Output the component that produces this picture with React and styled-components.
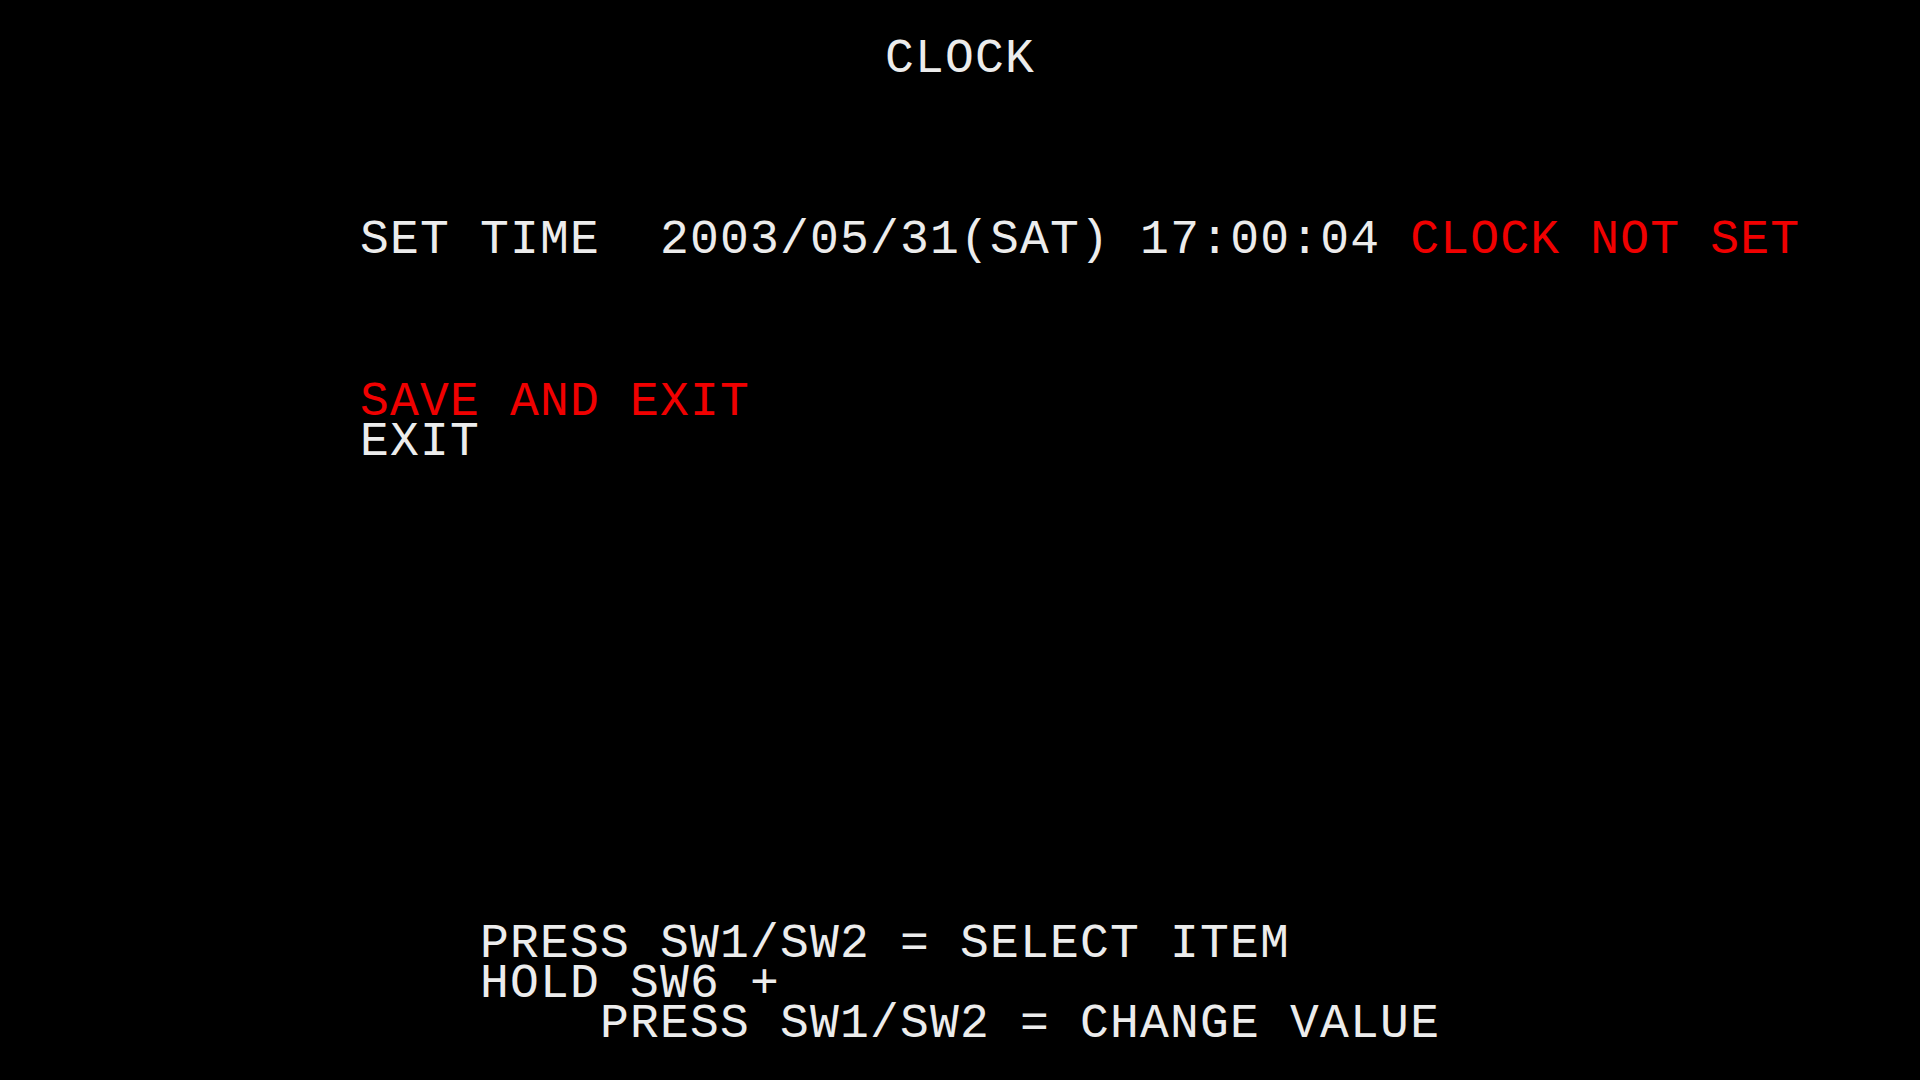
import React from 'react'
import styled, { createGlobalStyle } from 'styled-components'

const GlobalStyle = createGlobalStyle`
    html, body {
        margin: 0;
        padding: 0;
        background: #000;
    }
`

const Screen = styled.div`
    width: 1920px;
    height: 1080px;
    background: #000;
    box-sizing: border-box;
    padding: 39px 0 36px 360px;
    display: flex;
    flex-direction: column;
    overflow: hidden;
    font-family: "Liberation Mono", "DejaVu Sans Mono", monospace;
    font-size: 48px;
    letter-spacing: 1.2px;
    line-height: 40px;
    color: #ececec;
    white-space: pre;
`
const Title = styled.div`
    margin-left: -360px;
    text-align: center;
    height: 40px;
`
const Row = styled.div`
    height: 40px;
    margin-top: ${props => props.gap || 0}px;
    padding-left: ${props => props.indent || 0}px;
`
const Red = styled.span`
    color: ${props => props.dim ? "#d80000" : "#f00000"};
`
const Menu = styled.div`
    display: flex;
    flex-direction: column;
    margin-top: 122px;
`
const Help = styled.div`
    display: flex;
    flex-direction: column;
    margin-top: auto;
`

const App = () => {
  return (
    <>
        <GlobalStyle/>
        <Screen>
            <Title>CLOCK</Title>
            <Row gap={141}>
                SET TIME  2003/05/31(SAT) 17:00:04 <Red>CLOCK NOT SET</Red>
            </Row>
            <Menu>
                <Row><Red>SAVE AND EXIT</Red></Row>
                <Row>EXIT</Row>
            </Menu>
            <Help>
                <Row indent={120}>PRESS SW1/SW2 = SELECT ITEM</Row>
                <Row indent={120}>HOLD SW6 +</Row>
                <Row indent={240}>PRESS SW1/SW2 = CHANGE VALUE</Row>
            </Help>
        </Screen>
    </>
  )
}

export default App
